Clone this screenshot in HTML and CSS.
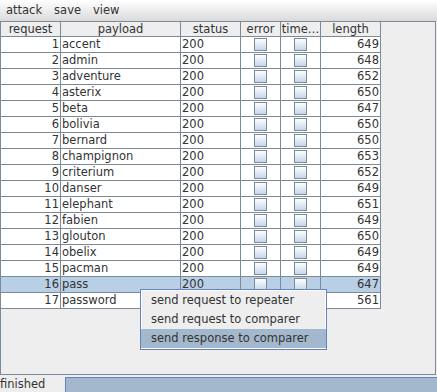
FILE: index.html
```html
<!DOCTYPE html>
<html lang="en">
<head>
    <meta charset="UTF-8">
    <title>intruder results</title>
    <link rel="stylesheet" href="styles.css">
</head>
<body>
    <div class="menubar">
        <span class="menu">attack</span>
        <span class="menu">save</span>
        <span class="menu">view</span>
    </div>

    <div class="pane">
        <table class="results">
            <thead>
                <tr>
                    <th class="col-req">request</th>
                    <th class="col-payload">payload</th>
                    <th class="col-status">status</th>
                    <th class="col-error">error</th>
                    <th class="col-time">time…</th>
                    <th class="col-len">length</th>
                </tr>
            </thead>
            <tbody>
                <tr><td class="num">1</td><td>accent</td><td>200</td><td><span class="check"></span></td><td><span class="check"></span></td><td class="num">649</td></tr>
                <tr><td class="num">2</td><td>admin</td><td>200</td><td><span class="check"></span></td><td><span class="check"></span></td><td class="num">648</td></tr>
                <tr><td class="num">3</td><td>adventure</td><td>200</td><td><span class="check"></span></td><td><span class="check"></span></td><td class="num">652</td></tr>
                <tr><td class="num">4</td><td>asterix</td><td>200</td><td><span class="check"></span></td><td><span class="check"></span></td><td class="num">650</td></tr>
                <tr><td class="num">5</td><td>beta</td><td>200</td><td><span class="check"></span></td><td><span class="check"></span></td><td class="num">647</td></tr>
                <tr><td class="num">6</td><td>bolivia</td><td>200</td><td><span class="check"></span></td><td><span class="check"></span></td><td class="num">650</td></tr>
                <tr><td class="num">7</td><td>bernard</td><td>200</td><td><span class="check"></span></td><td><span class="check"></span></td><td class="num">650</td></tr>
                <tr><td class="num">8</td><td>champignon</td><td>200</td><td><span class="check"></span></td><td><span class="check"></span></td><td class="num">653</td></tr>
                <tr><td class="num">9</td><td>criterium</td><td>200</td><td><span class="check"></span></td><td><span class="check"></span></td><td class="num">652</td></tr>
                <tr><td class="num">10</td><td>danser</td><td>200</td><td><span class="check"></span></td><td><span class="check"></span></td><td class="num">649</td></tr>
                <tr><td class="num">11</td><td>elephant</td><td>200</td><td><span class="check"></span></td><td><span class="check"></span></td><td class="num">651</td></tr>
                <tr><td class="num">12</td><td>fabien</td><td>200</td><td><span class="check"></span></td><td><span class="check"></span></td><td class="num">649</td></tr>
                <tr><td class="num">13</td><td>glouton</td><td>200</td><td><span class="check"></span></td><td><span class="check"></span></td><td class="num">650</td></tr>
                <tr><td class="num">14</td><td>obelix</td><td>200</td><td><span class="check"></span></td><td><span class="check"></span></td><td class="num">649</td></tr>
                <tr><td class="num">15</td><td>pacman</td><td>200</td><td><span class="check"></span></td><td><span class="check"></span></td><td class="num">649</td></tr>
                <tr class="selected"><td class="num">16</td><td>pass</td><td>200</td><td><span class="check"></span></td><td><span class="check"></span></td><td class="num">647</td></tr>
                <tr><td class="num">17</td><td>password</td><td>200</td><td><span class="check"></span></td><td><span class="check"></span></td><td class="num">561</td></tr>
            </tbody>
        </table>

        <!-- context menu -->
        <div class="popup">
            <div class="popup-item">send request to repeater</div>
            <div class="popup-item">send request to comparer</div>
            <div class="popup-item active">send response to comparer</div>
        </div>
    </div>

    <div class="statusbar">
        <span class="status-text">finished</span>
        <div class="progress"></div>
    </div>
</body>
</html>
```

FILE: styles.css
```css
body {
    margin: 0;
    height: 392px;
    overflow: hidden;
    font-family: 'DejaVu Sans', sans-serif;
    font-size: 11.5px;
    color: #333;
    background-color: #eeeeee;
}
.menubar {
    display: flex;
    height: 21px;
    background: linear-gradient(#ffffff, #dadada);
}
.menu {
    padding: 0 6px;
    line-height: 20px;
}
.pane {
    position: relative;
    width: 434px;
    height: 352px;
    border: 1px solid #7a8a99;
}
.results {
    table-layout: fixed;
    width: 380px;
    border-collapse: separate;
    border-spacing: 0;
    background-color: #fff;
}
.results th {
    box-sizing: border-box;
    height: 15px;
    padding: 0;
    font-weight: normal;
    line-height: 14px;
    background-color: #eeeeee;
    border-right: 1px solid #7a8a99;
    border-bottom: 1px solid #7a8a99;
    white-space: nowrap;
    overflow: hidden;
}
.col-req { width: 60px; }
.col-payload { width: 120px; }
.col-status { width: 60px; }
.col-error { width: 40px; }
.col-time { width: 40px; }
.col-len { width: 60px; }
.results td {
    height: 15px;
    padding: 0 1px;
    line-height: 15px;
    border-right: 1px solid #7a8a99;
    border-bottom: 1px solid #7a8a99;
    white-space: nowrap;
}
.results td.num { text-align: right; }
.results tr.selected td { background-color: #b8cfe5; }
.check {
    display: block;
    box-sizing: border-box;
    width: 13px;
    height: 13px;
    margin: 1px auto;
    border: 1px solid #7a8a99;
    background: linear-gradient(#fdfeff, #c6d7e9);
}
.popup {
    position: absolute;
    left: 139px;
    top: 267px;
    width: 185px;
    padding: 1px 0;
    border: 1px solid #6382bf;
    background-color: #eeeeee;
    box-shadow: inset 1px 1px #fff, inset -1px -1px #fff;
}
.popup-item {
    height: 19px;
    line-height: 19px;
    padding-left: 10px;
    white-space: nowrap;
}
.popup-item.active { background-color: #a3b8cc; }
.statusbar {
    display: flex;
    height: 17px;
}
.status-text {
    width: 65px;
    padding-top: 2px;
    line-height: 15px;
}
.progress {
    flex: 1;
    margin-top: 2px;
    height: 17px;
    border: 1px solid #6382bf;
    border-right: none;
    background-color: #a3b8cc;
}
```
